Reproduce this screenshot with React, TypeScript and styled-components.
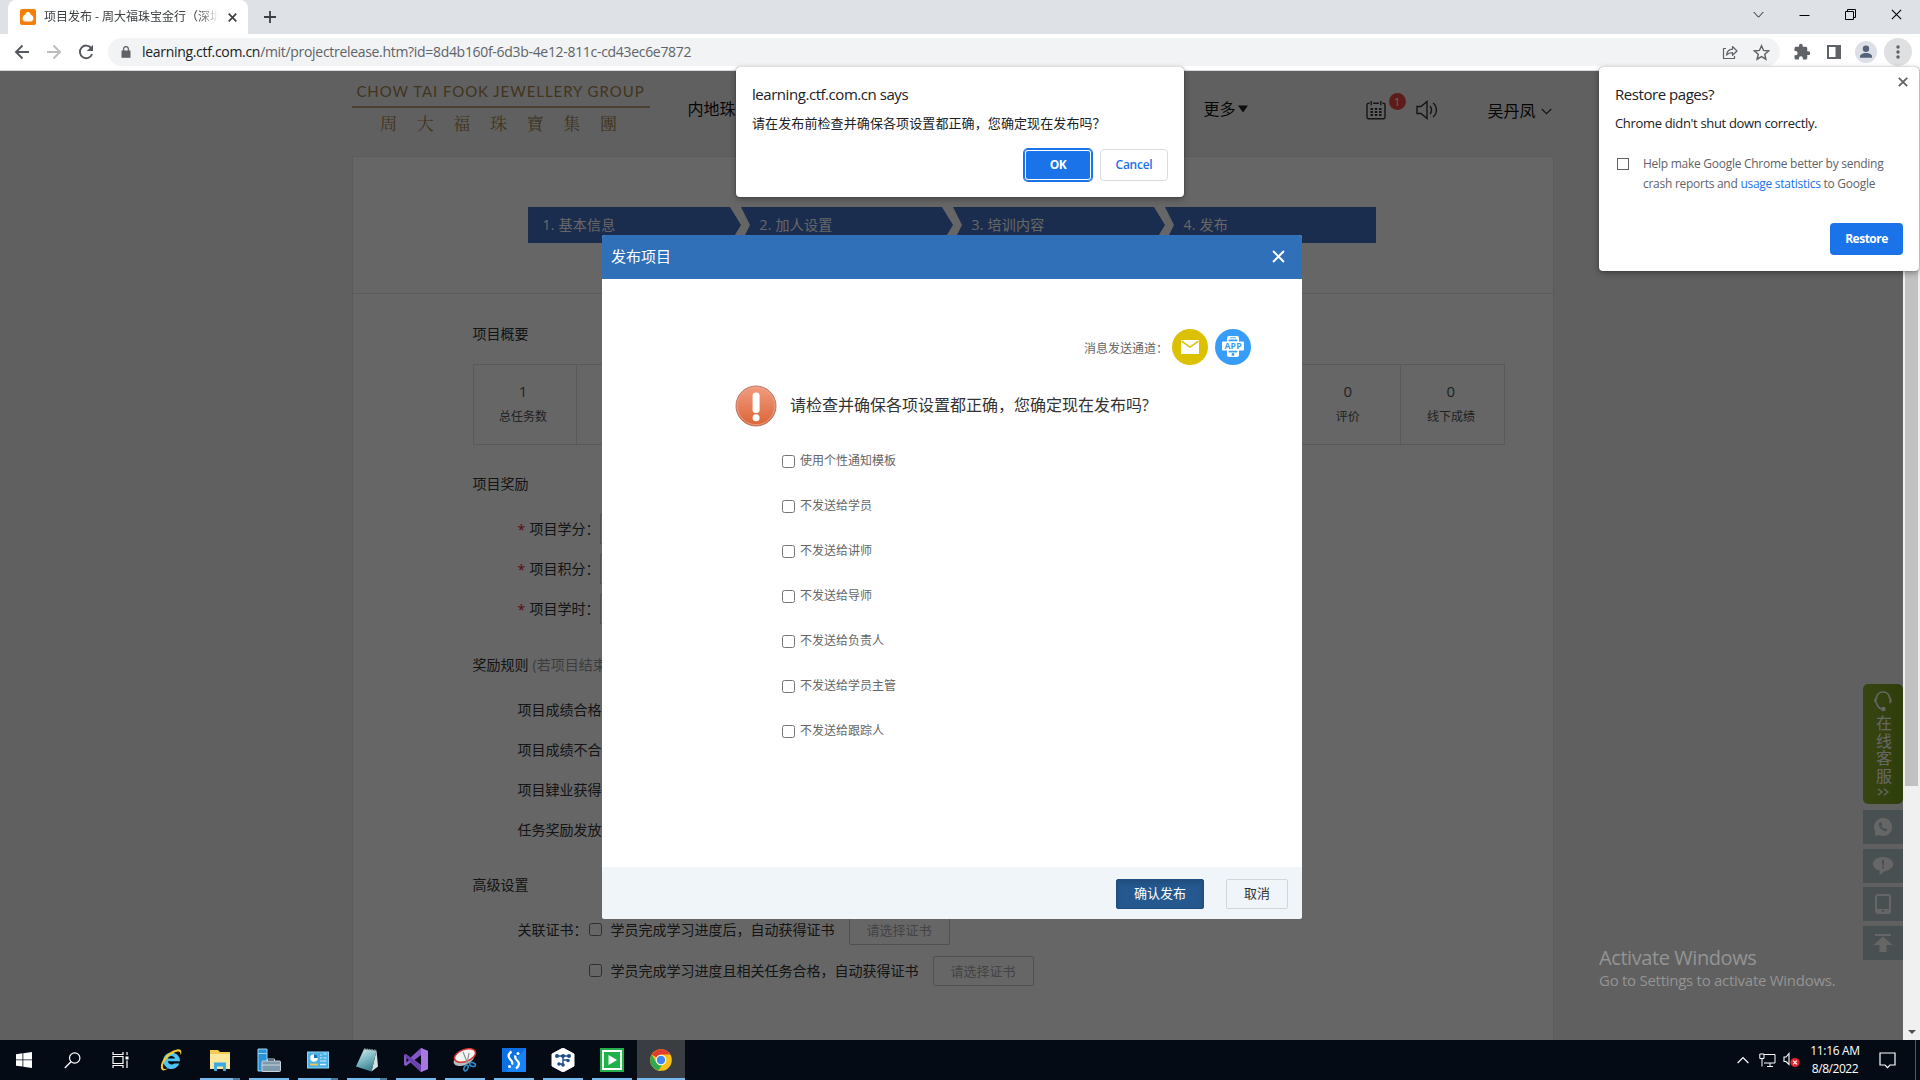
import React from "react";
import styled, { createGlobalStyle, css } from "styled-components";

const UI = `"Open Sans", "Noto Sans CJK SC", sans-serif`;

const Global = createGlobalStyle`
  *, *::before, *::after { box-sizing: border-box; }
  html, body { margin: 0; padding: 0; overflow: hidden; }
  body { font-family: ${UI}; background: #000; }
  svg { display: block; flex: none; }
`;

const Screen = styled.div`
  position: relative;
  width: 1920px;
  height: 1080px;
  display: flex;
  flex-direction: column;
  overflow: hidden;
`;

const Txt = styled.span<{ $size?: number; $ls?: number; $color?: string; $weight?: number; $lh?: number }>`
  font-size: ${(p) => p.$size ?? 14}px;
  letter-spacing: ${(p) => p.$ls ?? 0}px;
  color: ${(p) => p.$color ?? "inherit"};
  font-weight: ${(p) => p.$weight ?? 400};
  line-height: ${(p) => p.$lh ?? 20}px;
  white-space: nowrap;
`;

/* ---------- browser chrome ---------- */

const TabStrip = styled.div`
  height: 34px;
  flex: none;
  background: #dee1e6;
  display: flex;
  padding-left: 8px;
`;

const Tab = styled.div`
  width: 240px;
  background: #fff;
  border-radius: 8px 8px 0 0;
  display: flex;
  align-items: center;
  padding: 0 9px 0 12px;
`;

const Favicon = styled.div`
  width: 16px;
  height: 16px;
  border-radius: 2px;
  background: #f57f06;
  margin-right: 8px;
`;

const TabTitle = styled.div`
  width: 175px;
  overflow: hidden;
  font-size: 12px;
  line-height: 20px;
  color: #3c4043;
  white-space: nowrap;
  mask-image: linear-gradient(90deg, #000 88%, transparent 100%);
  margin-right: 9px;
`;

const NewTab = styled.div`
  display: flex;
  align-items: center;
  padding-left: 16px;
`;

const WindowControls = styled.div`
  margin-left: auto;
  display: flex;
  align-items: center;
  height: 28px;
  gap: 35px;
  padding-right: 18px;
`;

const Toolbar = styled.div`
  height: 37px;
  flex: none;
  background: #fff;
  border-bottom: 1px solid #d5d7da;
  display: flex;
  align-items: center;
`;

const NavButtons = styled.div`
  width: 108px;
  display: flex;
  align-items: center;
  gap: 16px;
  padding-left: 14px;
`;

const Omnibox = styled.div`
  width: 1672px;
  height: 28px;
  border-radius: 14px;
  background: #f1f3f4;
  display: flex;
  align-items: center;
  padding: 0 10px 0 13px;
`;

const Url = styled.div`
  flex: 1;
  padding-left: 11px;
  font-size: 14px;
  letter-spacing: -0.31px;
  line-height: 20px;
  color: #5f6368;
  white-space: nowrap;
`;

const UrlHost = styled.span`
  color: #202124;
`;

const OmniIcons = styled.div`
  display: flex;
  align-items: center;
  gap: 15px;
`;

const ToolIcons = styled.div`
  display: flex;
  align-items: center;
  padding-left: 13px;
`;

const Circle = styled.div<{ $d: number; $bg: string; $ml?: number }>`
  width: ${(p) => p.$d}px;
  height: ${(p) => p.$d}px;
  margin-left: ${(p) => p.$ml ?? 0}px;
  border-radius: 50%;
  background: ${(p) => p.$bg};
  display: flex;
  align-items: center;
  justify-content: center;
  flex: none;
`;

/* ---------- page ---------- */

const Viewport = styled.div`
  height: 969px;
  flex: none;
  display: flex;
`;

const Page = styled.div`
  position: relative;
  flex: 1;
  background: #f1f1f1;
  overflow: hidden;
  display: flex;
  flex-direction: column;
  align-items: center;
  padding-left: 2px;
`;

const Mask = styled.div`
  position: absolute;
  inset: 0;
  background: rgba(0, 0, 0, 0.6);
`;

const Header = styled.div`
  width: 1202px;
  height: 85px;
  flex: none;
  display: flex;
  align-items: flex-start;
  color: #111;
`;

const Logo = styled.div`
  width: 298px;
  padding-top: 10px;
  color: #a5834e;
  display: flex;
  flex-direction: column;
  align-items: center;
`;

const LogoLatin = styled.div`
  font-family: Lato, sans-serif;
  font-size: 15px;
  line-height: 20px;
  letter-spacing: 0.94px;
  white-space: nowrap;
`;

const LogoRule = styled.div`
  width: 298px;
  height: 2px;
  background: #a5834e;
  opacity: 0.7;
  margin-top: 5px;
`;

const LogoHan = styled.div`
  font-family: "Noto Serif CJK TC", "Noto Sans CJK TC", serif;
  width: 237px;
  display: flex;
  justify-content: space-between;
  font-size: 17px;
  line-height: 20px;
  margin: 5px 4px 0 0;
`;

const HeaderItem = styled.div<{ $ml: number; $mt: number }>`
  display: flex;
  align-items: center;
  height: 24px;
  margin-left: ${(p) => p.$ml}px;
  margin-top: ${(p) => p.$mt}px;
`;

const Badge = styled.div`
  width: 17px;
  height: 17px;
  border-radius: 50%;
  background: #e9483c;
  color: #fff;
  font-size: 11px;
  line-height: 17px;
  text-align: center;
  align-self: flex-start;
  margin: -5px 10px 0 3px;
`;

const Content = styled.div`
  width: 1202px;
  flex: 1;
  background: #fff;
  border: solid #e3e3e3;
  border-width: 1px 1px 0;
  color: #333;
`;

const Steps = styled.div`
  display: flex;
  width: 848px;
  height: 36px;
  margin: 50px 0 50px 175px;
  background: #4370c3;
  color: #fff;
`;

const Step = styled.div<{ $w: number; $pl: number }>`
  width: ${(p) => p.$w}px;
  padding-left: ${(p) => p.$pl}px;
  font-size: 14px;
  letter-spacing: 0.25px;
  line-height: 36px;
`;

const Section = styled.div`
  border-top: 1px solid #e3e3e3;
  padding: 0 0 0 120px;
`;

const Heading = styled.div<{ $mt: number }>`
  margin-top: ${(p) => p.$mt}px;
  height: 32px;
  line-height: 31px;
  font-size: 14px;
  white-space: nowrap;
`;

const Hint = styled.span`
  color: #999;
  padding-left: 4px;
`;

const Stats = styled.div`
  display: flex;
  width: 1032px;
  height: 81px;
  margin-top: 14px;
  border: 1px solid #dfdfdf;
`;

const Stat = styled.div`
  flex: 1;
  display: flex;
  flex-direction: column;
  align-items: center;
  padding: 16px 3px 0 0;
  gap: 6px;
  color: #555;
  & + & { border-left: 1px solid #dfdfdf; }
`;

const Group = styled.div<{ $mt: number }>`
  margin: ${(p) => p.$mt}px 0 0 45px;
`;

const Row = styled.div<{ $h?: number; $pl?: number }>`
  height: ${(p) => p.$h ?? 40}px;
  padding-left: ${(p) => p.$pl ?? 0}px;
  display: flex;
  align-items: center;
`;

const Star = styled.span`
  width: 12px;
  color: #e02020;
  font-size: 14px;
`;

const Field = styled.div`
  width: 120px;
  height: 30px;
  border: 1px solid #ccc;
`;

const Check = styled.span<{ $mr?: number; $ml?: number }>`
  width: 13px;
  height: 13px;
  flex: none;
  border: 1px solid #767676;
  border-radius: 2.5px;
  background: #fff;
  margin: 0 ${(p) => p.$mr ?? 9}px 0 ${(p) => p.$ml ?? 0}px;
`;

const OptionLabel = styled(Txt)`
  font-size: 12px;
  padding-bottom: 1px;
`;

const GhostButton = styled.div`
  width: 101px;
  height: 30px;
  border: 1px solid #c8c8c8;
  border-radius: 2px;
  margin-left: 14px;
  font-size: 13px;
  line-height: 28px;
  text-align: center;
  color: #aaa;
`;

const SideTools = styled.div`
  position: absolute;
  right: 0;
  top: 613px;
  width: 40px;
  display: flex;
  flex-direction: column;
`;

const Service = styled.div`
  height: 120px;
  border-radius: 5px;
  background: linear-gradient(90deg, #8aad2c, #739b1c);
  color: #fff;
  display: flex;
  flex-direction: column;
  align-items: center;
  justify-content: space-between;
  padding: 7px 0 8px;
  margin-bottom: 6px;
`;

const ServiceLabel = styled.span`
  writing-mode: vertical-rl;
  text-orientation: upright;
  font-size: 16px;
  letter-spacing: 1.6px;
  line-height: 20px;
`;

const SideButton = styled.div`
  height: 34px;
  margin-bottom: 4.6px;
  background: #b4c8cd;
  display: flex;
  align-items: center;
  justify-content: center;
`;

const Watermark = styled.div`
  position: absolute;
  left: 1599px;
  top: 944px;
  display: flex;
  flex-direction: column;
  color: #949494;
`;

const Scrollbar = styled.div`
  width: 17px;
  background: #f0f0f0;
  display: flex;
  flex-direction: column;
  align-items: center;
  padding-top: 17px;
`;

const Thumb = styled.div`
  width: 13px;
  height: 698px;
  background: #c1c1c1;
`;

const ScrollArrow = styled.div`
  margin: auto 0 6px;
  border: 4px solid transparent;
  border-top-color: #505050;
  border-bottom: 0;
`;

/* ---------- modal ---------- */

const Modal = styled.div`
  position: absolute;
  left: 602px;
  top: 235px;
  width: 700px;
  height: 684px;
  border-radius: 3px;
  overflow: hidden;
  background: #fff;
  display: flex;
  flex-direction: column;
`;

const ModalHead = styled.div`
  height: 44px;
  background: #2f70b8;
  color: #fff;
  display: flex;
  align-items: center;
  justify-content: space-between;
  padding: 0 17px 2px 9px;
`;

const ModalBody = styled.div`
  flex: 1;
  padding-top: 50px;
`;

const Channels = styled.div`
  display: flex;
  align-items: center;
  height: 36px;
  padding-left: 482px;
  gap: 7px;
  color: #666;
`;

const ChannelLabel = styled(Txt)`
  font-size: 12px;
  padding-top: 3px;
`;

const Question = styled.div`
  display: flex;
  align-items: center;
  margin-top: 20px;
  height: 42px;
  padding-left: 133px;
  gap: 13px;
  color: #333;
`;

const QuestionText = styled(Txt)`
  font-size: 16px;
  padding-bottom: 3px;
`;

const Options = styled.div`
  margin-top: 12px;
  padding-left: 180px;
  color: #666;
`;

const ModalFoot = styled.div`
  height: 52px;
  background: #f0f5fa;
  display: flex;
  justify-content: flex-end;
  padding: 12px 14px 0 0;
  gap: 22px;
`;

const ModalButton = styled.div<{ $primary?: boolean }>`
  height: 30px;
  width: ${(p) => (p.$primary ? 88 : 62)}px;
  border-radius: 2px;
  text-align: center;
  font-size: 13px;
  line-height: 27px;
  ${(p) =>
    p.$primary
      ? css`background: #25588f; border: 1px solid #204d80; color: #fff; box-shadow: inset 0 3px 5px rgba(0, 0, 0, 0.13);`
      : css`border: 1px solid #d3d6d9; color: #333;`}
`;

/* ---------- browser popups ---------- */

const popup = css`
  position: absolute;
  top: 67px;
  background: #fff;
  border-radius: 4px;
  box-shadow: 0 0 1px rgba(0, 0, 0, 0.6), 0 2px 6px rgba(0, 0, 0, 0.35);
  color: #202124;
  display: flex;
  flex-direction: column;
  gap: 9px;
`;

const Alert = styled.div`
  ${popup}
  left: 736px;
  width: 448px;
  height: 130px;
  padding: 17px 16px 16px;
`;

const AlertActions = styled.div`
  margin-top: auto;
  display: flex;
  justify-content: flex-end;
  gap: 8px;
`;

const ChromeButton = styled.div<{ $kind: "focus" | "plain" | "outline"; $w: number }>`
  width: ${(p) => p.$w}px;
  height: 32px;
  border-radius: 4px;
  display: flex;
  align-items: center;
  justify-content: center;
  padding-bottom: 1px;
  font-size: 12px;
  font-weight: 600;
  letter-spacing: -0.25px;
  ${(p) =>
    p.$kind === "outline"
      ? css`border: 1px solid #dadce0; color: #1a73e8;`
      : css`background: #1a73e8; color: #fff; font-weight: 700; letter-spacing: -0.5px;`}
  ${(p) => p.$kind === "focus" && css`box-shadow: inset 0 0 0 1px #1a73e8, inset 0 0 0 2px #fff, 0 0 0 1px #1a73e8;`}
`;

const Restore = styled.div`
  ${popup}
  left: 1599px;
  width: 320px;
  height: 204px;
  padding: 10px 16px 16px;
`;

const RestoreClose = styled.div`
  display: flex;
  justify-content: flex-end;
  height: 7px;
  margin: 0 -5px -9px 0;
`;

const Consent = styled.div`
  display: flex;
  margin-top: 12px;
`;

const ConsentBox = styled.div`
  width: 12px;
  height: 12px;
  border: 1.5px solid #5f6368;
  margin: 4px 14px 0 2px;
`;

const ConsentText = styled.div`
  display: flex;
  flex-direction: column;
  font-size: 12px;
  line-height: 20px;
  letter-spacing: -0.27px;
  color: #5f6368;
  white-space: nowrap;
`;

const Link = styled.span`
  color: #1a73e8;
`;

const RestoreActions = styled.div`
  margin-top: auto;
  display: flex;
  justify-content: flex-end;
`;

/* ---------- taskbar ---------- */

const Taskbar = styled.div`
  height: 40px;
  flex: none;
  background: #050b14;
  display: flex;
  color: #fff;
`;

const TaskItem = styled.div<{ $w: number; $ml?: number; $open?: boolean; $active?: boolean; $multi?: boolean }>`
  width: ${(p) => p.$w}px;
  margin-left: ${(p) => p.$ml ?? 0}px;
  height: 40px;
  display: flex;
  align-items: center;
  justify-content: center;
  ${(p) => p.$active && css`background: #3a3d42;`}
  ${(p) => p.$open && css`border-bottom: 2px solid #76b9ed; padding-top: 2px;`}
  ${(p) => p.$multi && css`border-image: linear-gradient(90deg, #76b9ed 80%, #4e7a9e 80%) 2;
    border-width: 0 0 2px; `}
`;

const Tray = styled.div`
  margin-left: auto;
  display: flex;
  align-items: center;
`;

const Clock = styled.div`
  width: 66px;
  margin: 0 11px 0 1px;
  display: flex;
  flex-direction: column;
  align-items: center;
`;

const ShowDesktop = styled.div`
  width: 5px;
  height: 40px;
  border-left: 1px solid #55595f;
  margin-left: 19px;
`;

/* ---------- icons ---------- */

const Cross = ({ s, c, w = 1.5 }: { s: number; c: string; w?: number }) => (
  <svg width={s} height={s} viewBox="0 0 10 10">
    <path d="M.8.8l8.4 8.4M9.2.8L.8 9.2" stroke={c} strokeWidth={(w * 10) / s} fill="none" />
  </svg>
);

const StepArrow = () => (
  <svg width="20" height="36" viewBox="0 0 20 36">
    <path d="M0 0h11l9 18-9 18H0l11-18z" fill="#fff" />
  </svg>
);

const ChromeLogo = () => (
  <svg width="22" height="22" viewBox="-12 -12 24 24">
    <circle r="11.8" fill="#fbc116" />
    <path d="M-10.2-5.9A11.8 11.8 0 0 1 10.2-5.9H0A5.9 5.9 0 0 0-5.1-2.95z" fill="#e33b2e" />
    <path d="M-10.2-5.9L-5.1 2.95A5.9 5.9 0 0 0 0 5.9h2L0 11.8A11.8 11.8 0 0 1-10.2-5.9z" fill="#2da94f" />
    <path d="M5.1 2.95L0 11.8-3 11.4 1 5.6z" fill="#fbc116" />
    <circle r="5.7" fill="#fff" />
    <circle r="4.6" fill="#4285f4" />
  </svg>
);

const options = ["使用个性通知模板", "不发送给学员", "不发送给讲师", "不发送给导师", "不发送给负责人", "不发送给学员主管", "不发送给跟踪人"];
const stats: ([string, string] | null)[] = [["1", "总任务数"], null, null, null, null, null, null, null, ["0", "评价"], ["0", "线下成绩"]];

function BrowserBar() {
  return (
    <>
      <TabStrip>
        <Tab>
          <Favicon>
            <svg width="16" height="16" viewBox="0 0 16 16">
              <path d="M8 3c1.600 0 2.300 1.200 2.600 2.600 1.600.6 2.900 2.200 2.900 4 0 1.700-1.200 2.900-2.900 2.900H5.400c-1.700 0-2.900-1.200-2.900-2.900 0-1.800 1.300-3.400 2.900-4C5.700 4.200 6.400 3 8 3z" fill="#fff" />
            </svg>
          </Favicon>
          <TabTitle>项目发布 - 周大福珠宝金行（深圳</TabTitle>
          <Cross s={9} c="#3c4043" w={1.7} />
        </Tab>
        <NewTab>
          <svg width="12" height="12" viewBox="0 0 12 12"><path d="M6 0v12M0 6h12" stroke="#3c4043" strokeWidth="1.8" /></svg>
        </NewTab>
        <WindowControls>
          <svg width="11" height="11" viewBox="0 0 11 11"><path d="M.7 3l4.800 5.200L10.300 3" stroke="#222" fill="none" /></svg>
          <svg width="11" height="11" viewBox="0 0 11 11"><path d="M.5 6.500h10" stroke="#000" /></svg>
          <svg width="11" height="11" viewBox="0 0 11 11"><path d="M.5 2.500h8v8h-8zM2.500 2.500v-2h8v8h-2" stroke="#000" fill="none" /></svg>
          <Cross s={11} c="#000" w={1.1} />
        </WindowControls>
      </TabStrip>
      <Toolbar>
        <NavButtons>
          <svg width="16" height="16" viewBox="0 0 16 16"><path d="M15 8H2M8.500 1.500L2 8l6.500 6.500" stroke="#55585c" strokeWidth="1.900" fill="none" /></svg>
          <svg width="16" height="16" viewBox="0 0 16 16"><path d="M1 8h13M7.500 1.500L14 8l-6.500 6.500" stroke="#babcbe" strokeWidth="1.900" fill="none" /></svg>
          <svg width="16" height="16" viewBox="0 0 16 16"><path d="M13.300 4.200A6.300 6.300 0 1 0 14.100 10" stroke="#55585c" strokeWidth="1.900" fill="none" /><path d="M15 .8v6.200H8.800z" fill="#55585c" /></svg>
        </NavButtons>
        <Omnibox>
          <svg width="10" height="12" viewBox="0 0 10 12"><path d="M.5 4.500h9v7.300h-9z" fill="#5f6368" /><path d="M2.600 5V3a2.400 2.400 0 0 1 4.800 0v2" stroke="#5f6368" strokeWidth="1.300" fill="none" /></svg>
          <Url><UrlHost>learning.ctf.com.cn</UrlHost>/mit/projectrelease.htm?id=8d4b160f-6d3b-4e12-811c-cd43ec6e7872</Url>
          <OmniIcons>
            <svg width="16" height="16" viewBox="0 0 16 16"><path d="M4 4.500H1.500v10h11V12M4.500 11c.5-3.500 2.500-5.500 6-5.800V2.500L15 7l-4.500 4.300V8.600C8 8.600 6 9.300 4.500 11z" stroke="#5f6368" strokeWidth="1.200" fill="none" strokeLinejoin="round" /></svg>
            <svg width="17" height="17" viewBox="0 0 24 24"><path d="M12 2.500l2.900 6.600 7.100.7-5.400 4.700 1.600 7L12 17.800l-6.200 3.700 1.600-7L2 9.800l7.100-.7z" stroke="#5f6368" strokeWidth="2" fill="none" /></svg>
          </OmniIcons>
        </Omnibox>
        <ToolIcons>
          <svg width="18" height="18" viewBox="0 0 24 24"><path d="M20.500 11H19V7c0-1.100-.9-2-2-2h-4V3.500a2.500 2.500 0 0 0-5 0V5H4c-1.100 0-2 .9-2 2v3.800h1.500a2.700 2.700 0 0 1 0 5.400H2V20c0 1.100.9 2 2 2h3.800v-1.500a2.700 2.700 0 0 1 5.400 0V22H17c1.100 0 2-.9 2-2v-4h1.500a2.500 2.500 0 0 0 0-5z" fill="#5f6368" /></svg>
          <svg width="14" height="14" viewBox="0 0 14 14" style={{ marginLeft: 16 }}><path d="M1 1h12v12H1z" stroke="#5f6368" strokeWidth="2" fill="#fff" /><path d="M8.500 1H13v12H8.500z" fill="#5f6368" /></svg>
          <svg width="22" height="22" viewBox="0 0 22 22" style={{ marginLeft: 14 }}><circle cx="11" cy="11" r="11" fill="#dce0e6" /><circle cx="11" cy="7.800" r="3.200" fill="#53617a" /><path d="M5 16.800v-1.300c0-2.300 3-3.500 6-3.500s6 1.200 6 3.500v1.300z" fill="#53617a" /></svg>
          <svg width="28" height="28" viewBox="0 0 28 28" style={{ marginLeft: 7 }}><circle cx="14" cy="14" r="14" fill="#dfe0e2" /><g fill="#5f6368"><circle cx="14" cy="9" r="1.700" /><circle cx="14" cy="14" r="1.700" /><circle cx="14" cy="19" r="1.700" /></g></svg>
        </ToolIcons>
      </Toolbar>
    </>
  );
}

function PageView() {
  return (
    <Page>
      <Header>
        <Logo>
          <LogoLatin>CHOW TAI FOOK JEWELLERY GROUP</LogoLatin>
          <LogoRule />
          <LogoHan>{[..."周大福珠寶集團"].map((c) => <span key={c}>{c}</span>)}</LogoHan>
        </Logo>
        <HeaderItem $ml={38} $mt={26}><Txt $size={16}>内地珠</Txt></HeaderItem>
        <HeaderItem $ml={468} $mt={26}>
          <Txt $size={16}>更多</Txt>
          <svg width="10" height="8" viewBox="0 0 10 8" style={{ marginLeft: 2 }}><path d="M0 .5h10L5 7.500z" fill="#222" /></svg>
        </HeaderItem>
        <HeaderItem $ml={118} $mt={27}>
          <svg width="20" height="20" viewBox="0 0 20 20" fill="none" stroke="#333" strokeWidth="1.400">
            <path d="M3.500 3.200H2.500a1.500 1.500 0 0 0-1.500 1.500v12.600a1.500 1.500 0 0 0 1.500 1.500h15a1.500 1.500 0 0 0 1.500-1.500V4.700a1.500 1.500 0 0 0-1.500-1.500h-1M7 3.200h6M5.200 1v4.200M14.800 1v4.200" />
            <path d="M4.500 9h2.500M8.800 9h2.500M13 9h2.500M4.500 12h2.500M8.800 12h2.500M13 12h2.500M4.500 15h2.500M8.800 15h2.500M13 15h2.500" strokeWidth="1.800" />
          </svg>
          <Badge>1</Badge>
          <svg width="23" height="20" viewBox="0 0 23 20" fill="none" stroke="#333" strokeWidth="1.400">
            <path d="M1 6.500h4L11 1.500v17L5 13.500H1z" /><path d="M14 6c2 2 2 6 0 8M17 3c4.500 3.500 4.500 10.500 0 14" />
          </svg>
        </HeaderItem>
        <HeaderItem $ml={49} $mt={28}>
          <Txt $size={16}>吴丹凤</Txt>
          <svg width="11" height="7" viewBox="0 0 11 7" style={{ marginLeft: 5 }}><path d="M.8 1l4.700 4.700L10.200 1" stroke="#333" fill="none" strokeWidth="1.200" /></svg>
        </HeaderItem>
      </Header>
      <Content>
        <Steps>
          <Step $w={202} $pl={15}>1. 基本信息</Step>
          <StepArrow />
          <Step $w={192} $pl={10}>2. 加人设置</Step>
          <StepArrow />
          <Step $w={192} $pl={10}>3. 培训内容</Step>
          <StepArrow />
          <Step $w={202} $pl={10}>4. 发布</Step>
        </Steps>
        <Section>
          <Heading $mt={24}>项目概要</Heading>
          <Stats>
            {stats.map((s, i) => (
              <Stat key={i}>{s && (<><Txt $size={15}>{s[0]}</Txt><Txt $size={12}>{s[1]}</Txt></>)}</Stat>
            ))}
          </Stats>
          <Heading $mt={23}>项目奖励</Heading>
          <Group $mt={9}>
            {["项目学分：", "项目积分：", "项目学时："].map((t) => (
              <Row key={t}><Star>*</Star><Txt>{t}</Txt><Field /></Row>
            ))}
          </Group>
          <Heading $mt={20}>奖励规则<Hint>(若项目结束</Hint></Heading>
          <Group $mt={9}>
            {["项目成绩合格", "项目成绩不合", "项目肄业获得", "任务奖励发放"].map((t) => (
              <Row key={t}><Txt>{t}</Txt></Row>
            ))}
          </Group>
          <Heading $mt={19}>高级设置</Heading>
          <Group $mt={8}>
            <Row $h={41}>
              <Txt>关联证书：</Txt><Check $ml={1} /><Txt>学员完成学习进度后，自动获得证书</Txt><GhostButton>请选择证书</GhostButton>
            </Row>
            <Row $h={41} $pl={71}>
              <Check /><Txt>学员完成学习进度且相关任务合格，自动获得证书</Txt><GhostButton>请选择证书</GhostButton>
            </Row>
          </Group>
        </Section>
      </Content>
      <SideTools>
        <Service>
          <svg width="20" height="21" viewBox="0 0 20 21" fill="none" stroke="#fff" strokeWidth="1.600">
            <path d="M3.500 7.500C3.500 3.500 6.200 1 10 1s6.500 2.500 6.500 6.500M3.500 12c.8 3 3 5.500 6 6.300" />
            <path d="M3.600 6.500v6C.5 12.500.5 6.500 3.600 6.500zM16.400 6.500v6c3.100 0 3.100-6 0-6z" fill="#fff" stroke="none" />
            <circle cx="10.500" cy="18" r="2.200" fill="#fff" stroke="none" />
          </svg>
          <ServiceLabel>在线客服</ServiceLabel>
          <svg width="12" height="8" viewBox="0 0 12 8"><path d="M1 .7L5 4 1 7.300M7 .7L11 4 7 7.300" stroke="#fff" fill="none" strokeWidth="1.300" /></svg>
        </Service>
        <SideButton>
          <svg width="18" height="18" viewBox="0 0 18 18"><path d="M9 0a9 9 0 1 1-3.500 17.300L1 17.600V13A9 9 0 0 1 9 0z" fill="#fff" /><path d="M6 4.200c-1.800 1-1.600 3.500.5 6 2.200 2.600 5 4 6.500 2.300.6-.7.3-1.200-.4-1.700-1.200-.9-1.600-.8-2.300 0-1.200-.5-2.400-1.800-2.800-3 .8-.6 1-1 .4-2.200C7.300 4.200 6.900 3.800 6 4.200z" fill="#b4c8cd" /></svg>
        </SideButton>
        <SideButton>
          <svg width="20" height="18" viewBox="0 0 20 18"><path d="M10 0c5.500 0 10 3 10 7s-3.500 6.500-8 6.900L6.500 18l.3-4.400C2.800 12.700 0 10.300 0 7c0-4 4.500-7 10-7z" fill="#fff" /><path d="M9 2.800h2v5.500H9zM9 9.500h2v2H9z" fill="#b4c8cd" /></svg>
        </SideButton>
        <SideButton>
          <svg width="16" height="20" viewBox="0 0 16 20"><rect x="1" y="1" width="14" height="18" rx="2" fill="none" stroke="#fff" strokeWidth="2" /><path d="M1 15h14v4H1z" fill="#fff" /><circle cx="8" cy="17" r="1.200" fill="#b4c8cd" /></svg>
        </SideButton>
        <SideButton>
          <svg width="20" height="18" viewBox="0 0 20 18"><path d="M2 0h16v2H2zM10 2.500L19.500 11H13.500v7h-7v-7H.5z" fill="#fff" /></svg>
        </SideButton>
      </SideTools>
      <Mask />
    </Page>
  );
}

function PublishModal() {
  return (
    <Modal>
      <ModalHead>
        <Txt $size={15}>发布项目</Txt>
        <Cross s={13} c="#fff" w={2} />
      </ModalHead>
      <ModalBody>
        <Channels>
          <ChannelLabel>消息发送通道：</ChannelLabel>
          <Circle $d={36} $bg="#dcc102" $ml={-3}>
            <svg width="18" height="14" viewBox="0 0 18 14"><path d="M0 0h18v14H0z" fill="#fff" /><path d="M.5 1.200L9 7l8.500-5.800" stroke="#dcc102" strokeWidth="1.500" fill="none" /></svg>
          </Circle>
          <Circle $d={36} $bg="#389df9">
            <svg width="22" height="22" viewBox="0 0 22 22">
              <rect x="5" y="0" width="12" height="21" rx="2" fill="#fff" />
              <path d="M8 1.800h6M7 4h8v1H7zM7 15h8v1H7z" stroke="#389df9" strokeWidth=".9" fill="#389df9" />
              <rect x="0" y="5.500" width="22" height="9" rx="1" fill="#fff" />
              <circle cx="11" cy="18.500" r="1.400" fill="#389df9" />
              <text x="11" y="13.200" textAnchor="middle" fontSize="8.500" fontWeight="700" fill="#389df9" fontFamily="Open Sans" textLength="17">APP</text>
            </svg>
          </Circle>
        </Channels>
        <Question>
          <svg width="42" height="42" viewBox="0 0 42 42">
            <defs><linearGradient id="warn" x1="0" y1="0" x2="0" y2="1"><stop offset="0" stopColor="#f09c80" /><stop offset="1" stopColor="#dc6436" /></linearGradient></defs>
            <circle cx="21" cy="21" r="20" fill="url(#warn)" stroke="#b87866" strokeWidth="1" />
            <circle cx="21" cy="21" r="18.700" fill="none" stroke="#f0a58c" strokeWidth=".8" />
            <rect x="17.600" y="7.500" width="7" height="20.500" rx="3.200" fill="#fff" />
            <circle cx="21.100" cy="32.800" r="3.500" fill="#fff" />
          </svg>
          <QuestionText>请检查并确保各项设置都正确，您确定现在发布吗?</QuestionText>
        </Question>
        <Options>
          {options.map((o) => (
            <Row key={o} $h={45}><Check $mr={5} /><OptionLabel>{o}</OptionLabel></Row>
          ))}
        </Options>
      </ModalBody>
      <ModalFoot>
        <ModalButton $primary>确认发布</ModalButton>
        <ModalButton>取消</ModalButton>
      </ModalFoot>
    </Modal>
  );
}

function Popups() {
  return (
    <>
      <Alert>
        <Txt $size={15} $ls={-0.45}>learning.ctf.com.cn says</Txt>
        <Txt $size={13} $ls={0.1}>请在发布前检查并确保各项设置都正确，您确定现在发布吗？</Txt>
        <AlertActions>
          <ChromeButton $kind="focus" $w={68}>OK</ChromeButton>
          <ChromeButton $kind="outline" $w={68}>Cancel</ChromeButton>
        </AlertActions>
      </Alert>
      <Restore>
        <RestoreClose><Cross s={10} c="#5f6368" w={1.8} /></RestoreClose>
        <Txt $size={15} $ls={-0.45}>Restore pages?</Txt>
        <Txt $size={13} $ls={-0.33}>Chrome didn't shut down correctly.</Txt>
        <Consent>
          <ConsentBox />
          <ConsentText>
            <span>Help make Google Chrome better by sending</span>
            <span>crash reports and <Link>usage statistics</Link> to Google</span>
          </ConsentText>
        </Consent>
        <RestoreActions><ChromeButton $kind="plain" $w={73}>Restore</ChromeButton></RestoreActions>
      </Restore>
    </>
  );
}

function TaskbarView() {
  return (
    <Taskbar>
      <TaskItem $w={48}>
        <svg width="16" height="16" viewBox="0 0 16 16"><path d="M0 2.200L6.500 1.300v6.200H0zM7.300 1.200L16 0v7.500H7.300zM0 8.300h6.500v6.300L0 13.800zM7.300 8.300H16V16l-8.700-1.200z" fill="#fff" /></svg>
      </TaskItem>
      <TaskItem $w={48}>
        <svg width="17" height="17" viewBox="0 0 17 17"><circle cx="10.700" cy="6" r="5.200" fill="none" stroke="#fff" strokeWidth="1.200" /><path d="M7 9.800L.8 16" stroke="#fff" strokeWidth="1.400" /></svg>
      </TaskItem>
      <TaskItem $w={48}>
        <svg width="17" height="16" viewBox="0 0 17 16" fill="none" stroke="#fff" strokeWidth="1.200"><path d="M1 4.500h10v7H1zM1 0v2.500h10V0M1 16v-2.500h10V16M15 0v3M15 8.500V16" /><path d="M13.500 4.500h3v3h-3z" fill="#fff" stroke="none" /></svg>
      </TaskItem>
      <TaskItem $w={54}>
        <svg width="24" height="24" viewBox="0 0 24 24">
          <path d="M12.500 4.500a8.300 8.300 0 1 0 7.800 11h-5a3.900 3.900 0 0 1-6.500-2.200H21A8.400 8.400 0 0 0 12.500 4.500zM8.800 10.500c.8-3.400 6.500-3.400 7.300 0z" fill="#4cc4f4" />
          <path d="M3 22C-1 18 6 4 18 1.500c5-.9 5 3 3.500 6 .5-3.500-1-5-5-3.500C8 8 2 17 4.500 20.500c1 1 3 .6 5-.4C7 22 4.500 23 3 22z" fill="#f2c92e" />
        </svg>
      </TaskItem>
      <TaskItem $w={40} $ml={2} $open $multi>
        <svg width="22" height="22" viewBox="0 0 22 22"><path d="M1 1h8l2 2h10v16H1z" fill="#f4ca55" /><path d="M1 5h20v15H1z" fill="#fde79b" /><path d="M5 22v-8.500h12V22h-3v-4.500H8V22z" fill="#39aae6" /></svg>
      </TaskItem>
      <TaskItem $w={40} $ml={9} $open>
        <svg width="24" height="24" viewBox="0 0 24 24"><path d="M1 1h9v22H1z" fill="#2b93d8" stroke="#9bd3f5" /><path d="M1 5.500h9" stroke="#9bd3f5" /><rect x="5" y="13" width="18.500" height="10.500" rx="1" fill="#7f99ad" stroke="#c7d5df" /><path d="M5 17h18.500M10.500 13v-2h7v2" stroke="#c7d5df" fill="none" /></svg>
      </TaskItem>
      <TaskItem $w={40} $ml={9} $open $multi>
        <svg width="22" height="18" viewBox="0 0 22 18"><rect x=".5" y="1" width="21" height="16" fill="#49b0e8" stroke="#8fd5f7" /><circle cx="7" cy="7" r="3.800" fill="#fff" /><path d="M7 7V3.200A3.800 3.800 0 0 1 10.800 7z" fill="#1b6fb4" /><path d="M13 4h2M16.500 3h3M13 7h2M16.500 7h3M13 10h6.500" stroke="#d8effb" strokeWidth="1.200" /><path d="M3 13.500h8" stroke="#f6c84b" strokeWidth="1.800" /><path d="M13 13.500h6" stroke="#e3f4fd" strokeWidth="1.400" /></svg>
      </TaskItem>
      <TaskItem $w={40} $ml={9} $open $multi>
        <svg width="24" height="24" viewBox="0 0 24 24">
          <defs><linearGradient id="pad" x1="0" y1="0" x2=".4" y2="1"><stop offset="0" stopColor="#d9eef0" /><stop offset=".5" stopColor="#86bfc9" /><stop offset="1" stopColor="#3f8795" /></linearGradient></defs>
          <path d="M21.500 2.500l1.500 16-6.500 5z" fill="#d8dfe0" />
          <path d="M9 1l12.500 1.500L16.500 23.500 1 18.500z" fill="url(#pad)" />
          <path d="M9 1l12.500 1.500" stroke="#8b9496" strokeWidth="1.600" strokeDasharray="1.500 1" />
        </svg>
      </TaskItem>
      <TaskItem $w={40} $ml={9} $open>
        <svg width="24" height="24" viewBox="0 0 24 24"><path d="M17 0l7 3v18l-7 3L6.500 14.500 2 18l-2-1V7l2-1 4.500 3.500z" fill="#8458c4" /><path d="M17 0l7 3v18l-7 3z" fill="#a679e0" /><path d="M17 7v10l-6.500-5zM2.500 9.500v5L5 12z" fill="#050b14" /><path d="M2 6l4.500 3.500L17 18v6L0 7z" fill="#6a3fae" /></svg>
      </TaskItem>
      <TaskItem $w={40} $ml={9} $open>
        <svg width="26" height="24" viewBox="0 0 26 24"><ellipse cx="12" cy="11" rx="11" ry="6" transform="rotate(-24 12 11)" fill="#b9bdc2" /><ellipse cx="13" cy="7.500" rx="11" ry="6" transform="rotate(-20 13 7.500)" fill="#f4f4f4" stroke="#d8322c" strokeWidth="1.500" /><path d="M11 4l5 12M17 5l-2 11" stroke="#8d9298" strokeWidth="1.200" /><g fill="none" stroke="#2d8ecb" strokeWidth="1.600"><ellipse cx="14" cy="20" rx="1.800" ry="3" transform="rotate(25 14 20)" /><ellipse cx="20.500" cy="16.500" rx="3" ry="1.800" transform="rotate(20 20.500 16.500)" /></g></svg>
      </TaskItem>
      <TaskItem $w={40} $ml={9} $open>
        <svg width="24" height="24" viewBox="0 0 24 24"><path d="M0 0h24v24H0z" fill="#0c6fe4" /><path d="M24 0v24H4z" fill="#1785f5" /><g fill="none" stroke="#fff" strokeWidth="2.300"><path d="M9.500 3.500C5.500 6.500 6 9.500 8.800 12c1.600 1.500 1.800 3 1.200 4.500" /><path d="M14 20.500c4-3 3.500-6 .7-8.500-1.600-1.500-1.800-3-1.200-4.500" /></g><circle cx="7.500" cy="18.500" r="1.500" fill="#fff" /><circle cx="16" cy="5.500" r="1.500" fill="#fff" /></svg>
      </TaskItem>
      <TaskItem $w={40} $ml={9} $open>
        <svg width="24" height="24" viewBox="0 0 24 24"><path d="M12 0l11 6v12l-11 6-11-6V6z" fill="#fff" stroke="#fff" strokeLinejoin="round" /><g fill="none" stroke="#1f4f88" strokeWidth="1.400"><path d="M6 8h12M12 8v8M12 12h5M12 16H8" /></g><g fill="#1f4f88"><circle cx="6" cy="8" r="2" /><circle cx="12" cy="8" r="2" /><circle cx="18" cy="8" r="2" /><circle cx="17" cy="12.500" r="1.800" /><circle cx="8" cy="16" r="1.800" /><circle cx="12" cy="17" r="1.800" /></g></svg>
      </TaskItem>
      <TaskItem $w={40} $ml={9} $open>
        <svg width="24" height="24" viewBox="0 0 24 24"><path d="M0 0h24v24H0z" fill="#25b04c" /><path d="M3 3h18v18H3z" fill="#1fb24a" stroke="#fff" strokeWidth="1.800" /><path d="M8.500 7l8.500 5-8.500 5z" fill="#fff" /></svg>
      </TaskItem>
      <TaskItem $w={48} $ml={5} $open $active><ChromeLogo /></TaskItem>
      <Tray>
        <svg width="12" height="8" viewBox="0 0 12 8"><path d="M.6 7L6 1.500 11.400 7" stroke="#fff" strokeWidth="1.200" fill="none" /></svg>
        <svg width="17" height="14" viewBox="0 0 17 14" fill="none" stroke="#fff" style={{ marginLeft: 10 }}><path d="M5 1.500h11v8.500H5M3 6v7.500M.8 1h4.200v4.500H.8zM8 13.500h6M11 10v3" /></svg>
        <svg width="18" height="16" viewBox="0 0 18 16" style={{ marginLeft: 7 }}><path d="M1 5h2l3-3.500v11L3 9.500H1z" stroke="#fff" fill="none" strokeWidth="1.100" /><circle cx="12" cy="10.500" r="4.600" fill="#e0252f" /><path d="M10.200 8.700l3.600 3.600M13.800 8.700l-3.600 3.600" stroke="#fff" strokeWidth="1.200" /></svg>
        <Clock>
          <Txt $size={12} $ls={-0.35} $lh={18}>11:16 AM</Txt>
          <Txt $size={12} $ls={-0.45} $lh={18}>8/8/2022</Txt>
        </Clock>
        <svg width="17" height="17" viewBox="0 0 17 17"><path d="M1 1h15v12h-5l-2.500 2.700L6 13H1z" stroke="#fff" strokeWidth="1.200" fill="none" /></svg>
        <ShowDesktop />
      </Tray>
    </Taskbar>
  );
}

export default function App() {
  return (
    <Screen>
      <Global />
      <BrowserBar />
      <Viewport>
        <PageView />
        <Scrollbar><Thumb /><ScrollArrow /></Scrollbar>
      </Viewport>
      <TaskbarView />
      <PublishModal />
      <Popups />
      <Watermark>
        <Txt $size={20} $ls={-0.42} $lh={28}>Activate Windows</Txt>
        <Txt $size={15} $ls={-0.27} $lh={17}>Go to Settings to activate Windows.</Txt>
      </Watermark>
    </Screen>
  );
}
